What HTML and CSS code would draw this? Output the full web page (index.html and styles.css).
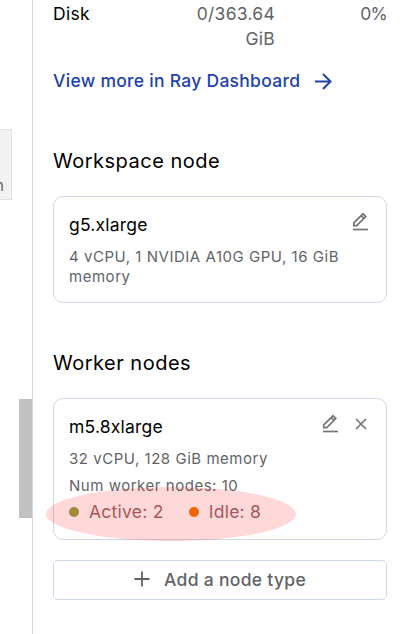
FILE: index.html
```html
<!DOCTYPE html>
<html lang="en">
<head>
<meta charset="utf-8">
<title>Cluster nodes</title>
<link rel="stylesheet" href="styles.css">
</head>
<body>
<div class="layout">
  <div class="main">
    <div class="tile">n</div>
    <div class="scroll-thumb"></div>
  </div>
  <aside class="panel">
    <div class="usage"><span>Disk</span><span class="amount">0/363.64 GiB</span><span class="percent">0%</span></div>
    <a class="dashboard-link">View more in Ray Dashboard
      <svg width="18" height="18" viewBox="0 0 18 18"><path d="M1 9.5H16M9 2L16.5 9.5L9 17" /></svg>
    </a>
    <h2>Workspace node</h2>
    <section class="card">
      <div class="card-head"><h3>g5.xlarge</h3>
        <svg class="icon" width="18" height="19" viewBox="0 0 18 19"><path d="M1.8 13.7V10.8L11 1.8L13.8 4.6L4.7 13.7ZM9.2 3.6L12 6.4" /><path d="M1 17.5H16" /></svg>
      </div>
      <p>4 vCPU, 1 NVIDIA A10G GPU, 16 GiB memory</p>
    </section>
    <h2>Worker nodes</h2>
    <section class="card worker">
      <div class="card-head"><h3>m5.8xlarge</h3>
        <svg class="icon edit" width="18" height="19" viewBox="0 0 18 19"><path d="M1.8 13.7V10.8L11 1.8L13.8 4.6L4.7 13.7ZM9.2 3.6L12 6.4" /><path d="M1 17.5H16" /></svg>
        <svg class="icon close" width="12" height="12" viewBox="0 0 12 12"><path d="M1 1L11 11M11 1L1 11" /></svg>
      </div>
      <p>32 vCPU, 128 GiB memory</p>
      <p class="count">Num worker nodes: 10</p>
      <div class="highlight"></div>
      <div class="states"><span class="state active">Active: 2</span><span class="state idle">Idle: 8</span></div>
    </section>
    <button class="add" type="button"><svg width="16" height="16" viewBox="0 0 16 16"><path d="M8 .5V15.5M.5 8H15.5" /></svg>Add a node type</button>
  </aside>
</div>
</body>
</html>
```
FILE: styles.css
```css
* { box-sizing: border-box; }
body { margin: 0; background: #fff; font: 17.5px/25px Inter, sans-serif; letter-spacing: .26px; color: #000; }
h2, h3, p { margin: 0; font-weight: 400; }
svg { display: block; fill: none; stroke: currentColor; flex: none; }
.layout { display: flex; height: 634px; overflow: hidden; }
.main { width: 33px; flex: none; border-right: 1px solid #cfd8e6; padding-top: 129px; }
.tile { width: 12px; height: 71px; margin-bottom: 199px; background: #f2f2f2; border: 1px solid #e4e4e4; border-left: 0; padding: 46px 7px 0 0; font-size: 15px; line-height: 20px; color: #5f6368; display: flex; justify-content: flex-end; }
.scroll-thumb { width: 13px; height: 119px; margin-left: auto; background: #c1c1c1; }
.panel { flex: 1; padding: 1px 18px 0 20px; }
.usage { display: grid; grid-template-columns: 132px 90px 1fr; height: 50px; }
.amount, .percent { text-align: right; color: #5f6368; }
.percent { letter-spacing: -.7px; }
.dashboard-link { display: flex; align-items: center; gap: 14px; margin-top: 17px; color: #2142ab; font-weight: 500; letter-spacing: .28px; }
.dashboard-link svg { stroke-width: 2; }
h2 { font-size: 20px; line-height: 30px; letter-spacing: .5px; margin: 53px 0 20px; }
.card { position: relative; height: 107px; padding: 15px; border: 1px solid #cfd8e6; border-radius: 10px; }
.card + h2 { margin-top: 45px; }
.worker { height: 142px; }
.card-head { display: flex; height: 25px; }
h3 { flex: 1; font-size: 17.5px; line-height: 25px; letter-spacing: .2px; }
.icon { color: #757575; stroke-width: 1.7; margin-right: 1px; }
.edit { margin-right: 0; }
.close { margin: 4px 4px 0 15px; }
.card p { font-size: 15px; line-height: 20px; letter-spacing: .53px; color: #5f6368; margin-top: 10px; }
.card .count { margin-top: 7px; }
.states { position: relative; top: 3px; display: flex; gap: 25px; color: #a9565b; }
.state { display: flex; align-items: center; gap: 10px; }
.state::before { content: ""; width: 10px; height: 10px; border-radius: 50%; background: #9f8a3b; }
.idle::before { background: #ec6608; }
.highlight { position: absolute; left: -8px; top: 88px; width: 250px; height: 54px; border-radius: 50%; background: rgba(255,0,0,.15); }
.add { display: flex; align-items: center; justify-content: center; gap: 14px; width: 100%; height: 40px; margin-top: 20px; padding: 0 6px 2px 6px; border: 1px solid #cfd8e6; border-radius: 5px; background: #fff; color: #5f6368; font: 500 17.5px/25px Inter, sans-serif; letter-spacing: .3px; }
.add svg { stroke-width: 1.8; }
```
